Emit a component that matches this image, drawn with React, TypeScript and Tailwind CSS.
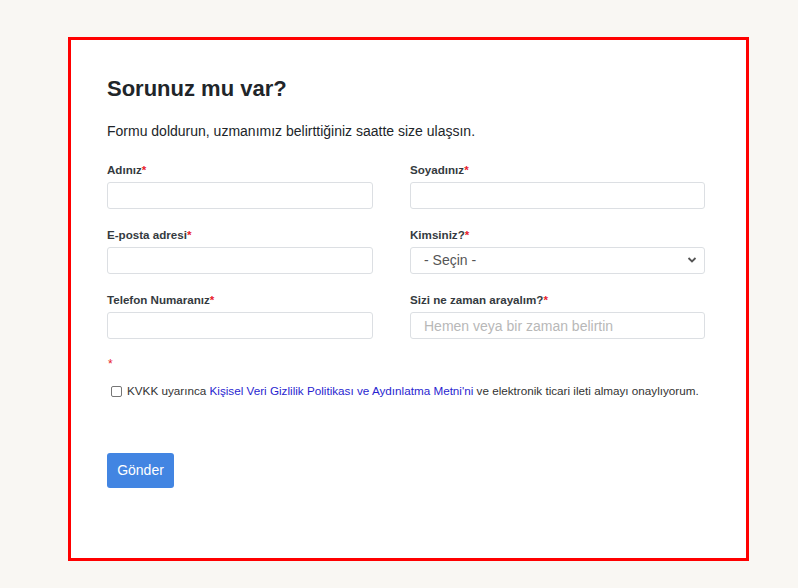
import React from "react"

function Req() {
  return <span className="text-[#e8202a]">*</span>
}

function Field({ label, children }: { label: string; children: React.ReactNode }) {
  return (
    <div className="flex flex-col">
      <label className="mb-[4px] text-[11.6px] font-bold leading-[16px] text-[#343a40]">
        {label}
        <Req />
      </label>
      {children}
    </div>
  )
}

const inputCls =
  "h-[27px] w-full rounded-[3px] border border-[#dcdfe3] bg-white px-[13px] text-[14px] text-[#555] outline-none placeholder:text-[#b8b8b8]"

export default function App() {
  return (
    <div
      className="min-h-[588px] w-full bg-[#f9f7f3] pl-[68px] pt-[37px]"
      style={{ fontFamily: '"Liberation Sans", Arial, sans-serif' }}
    >
      <div className="h-[524px] w-[681px] border-[3px] border-[#ff0000] bg-white pl-[36px] pt-[34px]">
        <h2 className="text-[22px] font-bold leading-[29px] text-[#212529]">Sorunuz mu var?</h2>
        <p className="mt-[18px] text-[14px] leading-[20px] text-[#212529]">
          Formu doldurun, uzmanımız belirttiğiniz saatte size ulaşsın.
        </p>

        <div className="mt-[21px] grid grid-cols-[266px_295px] gap-x-[37px] gap-y-[18px]">
          <Field label="Adınız">
            <input className={inputCls} />
          </Field>
          <Field label="Soyadınız">
            <input className={inputCls} />
          </Field>
          <Field label="E-posta adresi">
            <input className={inputCls} />
          </Field>
          <Field label="Kimsiniz?">
            <div className="relative">
              <select className={inputCls + " appearance-none"} defaultValue="">
                <option value="">- Seçin -</option>
              </select>
              <svg
                className="pointer-events-none absolute right-[8px] top-[9px]"
                width="10"
                height="8"
                viewBox="0 0 10 8"
              >
                <path d="M1.5 2 L5 5.5 L8.5 2" fill="none" stroke="#555" strokeWidth="1.8" />
              </svg>
            </div>
          </Field>
          <Field label="Telefon Numaranız">
            <input className={inputCls} />
          </Field>
          <Field label="Sizi ne zaman arayalım?">
            <input className={inputCls} placeholder="Hemen veya bir zaman belirtin" />
          </Field>
        </div>

        <div className="mt-[17px] pl-[1px] text-[12px] leading-[16px]">
          <Req />
        </div>
        <label className="mt-[11px] flex items-center pl-[4px] text-[11.7px] leading-[16px] text-[#333]">
          <span className="mr-[5px] inline-block h-[11px] w-[11px] rounded-[2px] border border-[#767676] bg-white" />
          <span>
            KVKK uyarınca{" "}
            <a className="text-[#2a1fd0]">Kişisel Veri Gizlilik Politikası ve Aydınlatma Metni'ni</a> ve elektronik
            ticari ileti almayı onaylıyorum.
          </span>
        </label>

        <button className="mt-[54px] h-[35px] w-[67px] rounded-[3px] bg-[#4285e2] text-[14px] text-white">
          Gönder
        </button>
      </div>
    </div>
  )
}
